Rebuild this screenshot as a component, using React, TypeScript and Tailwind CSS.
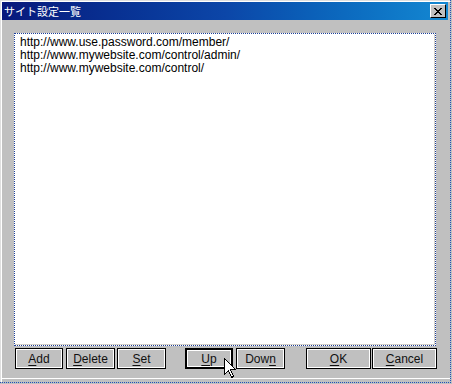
import React from 'react';

const urls = [
  'http://www.use.password.com/member/',
  'http://www.mywebsite.com/control/admin/',
  'http://www.mywebsite.com/control/',
];

type Btn = { label: string; key: string; rest: string; w: string; ml: string; def?: boolean };

const buttons: Btn[] = [
  { label: '', key: 'A', rest: 'dd', w: 'w-[48px]', ml: 'ml-0' },
  { label: '', key: 'D', rest: 'elete', w: 'w-[49px]', ml: 'ml-[3px]' },
  { label: '', key: 'S', rest: 'et', w: 'w-[49px]', ml: 'ml-[2px]' },
  { label: '', key: 'U', rest: 'p', w: 'w-[48px]', ml: 'ml-[19px]', def: true },
  { label: 'Dow', key: 'n', rest: '', w: 'w-[49px]', ml: 'ml-[3px]' },
  { label: '', key: 'O', rest: 'K', w: 'w-[65px]', ml: 'ml-[21px]' },
  { label: '', key: 'C', rest: 'ancel', w: 'w-[65px]', ml: 'ml-[1px]' },
];

function WinButton({ b }: { b: Btn }) {
  return (
    <div
      className={`${b.w} ${b.ml} h-[21px] bg-black ${b.def ? 'p-[2px]' : 'p-px'}`}
    >
      <div className="flex h-full w-full items-center justify-center border border-white bg-[#c0c0c0] text-[12px] leading-none text-[#111]">
        {b.label}
        <span className="underline underline-offset-2">{b.key}</span>
        {b.rest}
      </div>
    </div>
  );
}

export default function App() {
  return (
    <div
      className="relative h-[384px] w-[452px] overflow-hidden bg-[#c0c0c0]"
      style={{ fontFamily: '"Liberation Sans", Arial, "Noto Sans CJK JP", sans-serif' }}
    >
      <div className="h-[383px] w-[451px] border-r border-b border-dotted border-[#2050b8]">
        <div className="h-full w-full border-t border-l border-t-[#dfdfdf] border-l-[#dfdfdf]">
          <div className="h-full w-full border-t border-l border-white pr-[2px]">
            {/* Title bar */}
            <div className="flex h-[18px] items-center justify-between bg-gradient-to-r from-[#08187c] via-[#0c46a8] to-[#1488d2] pr-[2px] pl-[2px]">
              <span
                className="text-[11px] leading-none text-white"
                style={{ fontFamily: '"Noto Sans CJK JP", sans-serif' }}
              >
                サイト設定一覧
              </span>
              <div className="flex h-[14px] w-[16px] items-center justify-center border border-t-white border-l-white border-r-black border-b-black bg-[#c0c0c0]">
                <svg width="8" height="7" viewBox="0 0 8 7" shapeRendering="crispEdges">
                  <path d="M0 0h2v1H0zM6 0h2v1H6zM1 1h2v1H1zM5 1h2v1H5zM2 2h4v1H2zM3 3h2v1H3zM2 4h4v1H2zM1 5h2v1H1zM5 5h2v1H5zM0 6h2v1H0zM6 6h2v1H6z" fill="#000" />
                </svg>
              </div>
            </div>

            {/* List box */}
            <div className="mt-[13px] ml-[12px] h-[313px] w-[422px] border border-dotted border-[#1d3f9a] bg-white">
              <div className="h-full w-full border-r border-b border-[#d4d0c8] pt-[2px] pl-[5px]">
                {urls.map((u) => (
                  <div key={u} className="text-[12px] leading-[13px] text-black">
                    {u}
                  </div>
                ))}
              </div>
            </div>

            {/* Buttons */}
            <div className="mt-[2px] ml-[13px] flex">
              {buttons.map((b) => (
                <WinButton key={b.key + b.rest} b={b} />
              ))}
            </div>

            <div className="mt-[9px] ml-0 h-px w-[448px] bg-white" />
          </div>
        </div>
      </div>

      {/* Mouse cursor */}
      <svg
        className="absolute top-[358px] left-[224px]"
        width="13"
        height="21"
        viewBox="0 0 13 21"
        shapeRendering="crispEdges"
      >
        <path
          d="M0.5 0.5 L0.5 16.5 L4.5 12.5 L7.5 19.5 L9.5 18.5 L6.5 11.5 L11.5 11.5 Z"
          fill="#fff"
          stroke="#000"
          strokeWidth="1"
        />
      </svg>
    </div>
  );
}
